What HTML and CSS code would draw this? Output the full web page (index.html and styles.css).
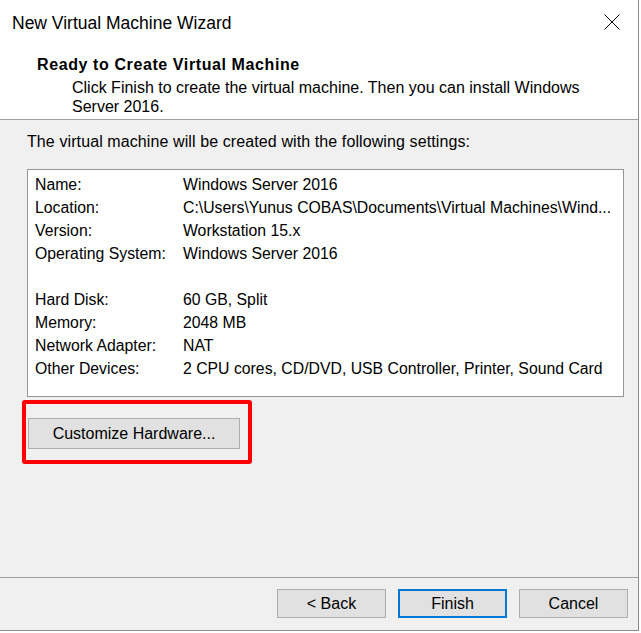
FILE: index.html
```html
<!DOCTYPE html>
<html>
<head>
<meta charset="utf-8">
<link rel="stylesheet" href="styles.css">
</head>
<body>
<div class="window">
  <div class="titlebar">
    <span class="title">New Virtual Machine Wizard</span>
    <svg class="close" width="16" height="16" viewBox="0 0 16 16"><path d="M0.5 0.5 L15.5 15.5 M15.5 0.5 L0.5 15.5" stroke="#000" stroke-width="1" fill="none"/></svg>
  </div>
  <div class="header">
    <div class="heading">Ready to Create Virtual Machine</div>
    <div class="subtitle">Click Finish to create the virtual machine. Then you can install Windows<br>Server 2016.</div>
  </div>
  <div class="content">
    <div class="intro">The virtual machine will be created with the following settings:</div>
    <div class="summary">
      <div class="label">Name:</div><div class="value">Windows Server 2016</div>
      <div class="label">Location:</div><div class="value">C:\Users\Yunus COBAS\Documents\Virtual Machines\Wind...</div>
      <div class="label">Version:</div><div class="value">Workstation 15.x</div>
      <div class="label">Operating System:</div><div class="value">Windows Server 2016</div>
      <div class="label">&nbsp;</div><div class="value">&nbsp;</div>
      <div class="label">Hard Disk:</div><div class="value">60 GB, Split</div>
      <div class="label">Memory:</div><div class="value">2048 MB</div>
      <div class="label">Network Adapter:</div><div class="value">NAT</div>
      <div class="label">Other Devices:</div><div class="value">2 CPU cores, CD/DVD, USB Controller, Printer, Sound Card</div>
    </div>
    <div class="highlight">
      <button class="btn btn-wide">Customize Hardware...</button>
    </div>
  </div>
  <div class="footer">
    <button class="btn">&lt; Back</button>
    <button class="btn btn-default">Finish</button>
    <button class="btn">Cancel</button>
  </div>
</div>
</body>
</html>
```
FILE: styles.css
```css
html, body {
  margin: 0;
  padding: 0;
  background: #ffffff;
}
body {
  font-family: "Liberation Sans", Arial, sans-serif;
  font-size: 16px;
  color: #000;
}
.window {
  width: 638px;
  height: 630px;
  border-right: 1px solid #8a8a8a;
  border-bottom: 1px solid #8a8a8a;
  display: flex;
  flex-direction: column;
  background: #f0f0f0;
}
.titlebar {
  height: 44px;
  background: #fff;
  display: flex;
  align-items: center;
  justify-content: space-between;
  padding: 0 18px 0 12px;
}
.title {
  font-size: 17.5px;
  margin-top: 2px;
}
.close {
  display: block;
}
.header {
  height: 75px;
  background: #fff;
  border-bottom: 1px solid #a0a0a0;
  padding-left: 37px;
  box-sizing: content-box;
}
.heading {
  font-weight: bold;
  font-size: 16px;
  letter-spacing: 0.6px;
  line-height: 20px;
  margin-top: 11px;
}
.subtitle {
  padding-left: 35px;
  line-height: 19px;
  margin-top: 3px;
}
.content {
  flex: 1;
  padding: 12px 0 0 27px;
}
.intro {
  line-height: 20px;
  letter-spacing: 0.1px;
}
.summary {
  margin-top: 17px;
  border: 1px solid #969696;
  background: #fff;
  display: grid;
  grid-template-columns: 148px 1fr;
  grid-auto-rows: 23px;
  align-content: start;
  padding: 3px 0 0 7px;
  box-sizing: border-box;
  width: 597px;
  height: 228px;
  white-space: nowrap;
  font-size: 15.8px;
}
.label, .value {
  line-height: 23px;
}
.highlight {
  margin: 3px 0 0 -5px;
  width: 230px;
  height: 64px;
  border: 4px solid #ff0000;
  border-radius: 3px;
  box-sizing: border-box;
  padding: 14px 0 0 2px;
}
.btn {
  font-family: inherit;
  font-size: 16px;
  background: #e1e1e1;
  border: 1px solid #adadad;
  color: #000;
  height: 29px;
  width: 109px;
  padding: 1px 0 0 0;
  margin: 0;
}
.btn-wide {
  width: 212px;
  height: 31px;
  display: block;
}
.btn-default {
  border: 2px solid #0078d7;
}
.footer {
  height: 53px;
  border-top: 1px solid #a0a0a0;
  display: flex;
  justify-content: flex-end;
  gap: 12px;
  padding: 11px 10px 0 0;
  box-sizing: border-box;
}
```
